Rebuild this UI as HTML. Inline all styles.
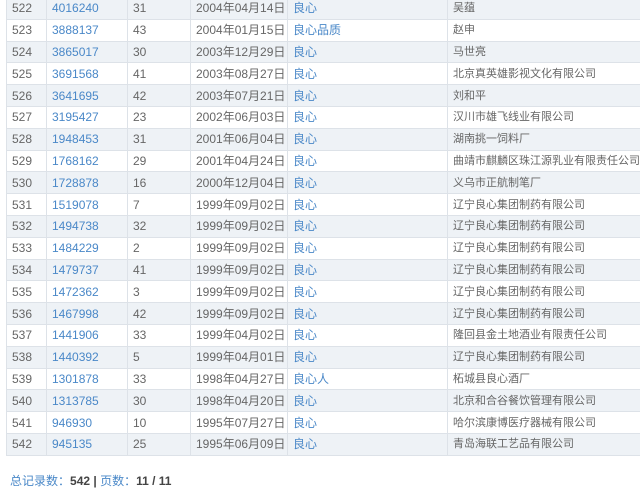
<!DOCTYPE html>
<html><head><meta charset="utf-8"><style>
html,body{margin:0;padding:0;background:#fff;width:640px;height:492px;overflow:hidden;font-family:"Liberation Sans","Noto Sans CJK SC",sans-serif;font-size:12px;color:#666}
table{position:absolute;left:6px;top:-3px;border-collapse:collapse;width:640px;table-layout:fixed}
tr{height:21.8px}
td{border:1px solid #dde2e8;padding:0 0 0 5px;white-space:nowrap;overflow:hidden;line-height:14px;vertical-align:middle}
td:last-child{font-size:11px}
tr:nth-child(odd) td{background:#eef2f6}
a{color:#4a88c8;text-decoration:none}
.f{position:absolute;left:10px;top:472px;font-size:12px;color:#4a88c8}
.f b{color:#444}
</style></head><body>
<table>
<colgroup><col style="width:40px"><col style="width:81px"><col style="width:63px"><col style="width:97px"><col style="width:160px"><col style="width:199px"></colgroup>
<tr><td>522</td><td><a>4016240</a></td><td>31</td><td>2004年04月14日</td><td><a>良心</a></td><td>吴蕴</td></tr>
<tr><td>523</td><td><a>3888137</a></td><td>43</td><td>2004年01月15日</td><td><a>良心品质</a></td><td>赵申</td></tr>
<tr><td>524</td><td><a>3865017</a></td><td>30</td><td>2003年12月29日</td><td><a>良心</a></td><td>马世亮</td></tr>
<tr><td>525</td><td><a>3691568</a></td><td>41</td><td>2003年08月27日</td><td><a>良心</a></td><td>北京真英雄影视文化有限公司</td></tr>
<tr><td>526</td><td><a>3641695</a></td><td>42</td><td>2003年07月21日</td><td><a>良心</a></td><td>刘和平</td></tr>
<tr><td>527</td><td><a>3195427</a></td><td>23</td><td>2002年06月03日</td><td><a>良心</a></td><td>汉川市雄飞线业有限公司</td></tr>
<tr><td>528</td><td><a>1948453</a></td><td>31</td><td>2001年06月04日</td><td><a>良心</a></td><td>湖南挑一饲料厂</td></tr>
<tr><td>529</td><td><a>1768162</a></td><td>29</td><td>2001年04月24日</td><td><a>良心</a></td><td>曲靖市麒麟区珠江源乳业有限责任公司</td></tr>
<tr><td>530</td><td><a>1728878</a></td><td>16</td><td>2000年12月04日</td><td><a>良心</a></td><td>义乌市正航制笔厂</td></tr>
<tr><td>531</td><td><a>1519078</a></td><td>7</td><td>1999年09月02日</td><td><a>良心</a></td><td>辽宁良心集团制药有限公司</td></tr>
<tr><td>532</td><td><a>1494738</a></td><td>32</td><td>1999年09月02日</td><td><a>良心</a></td><td>辽宁良心集团制药有限公司</td></tr>
<tr><td>533</td><td><a>1484229</a></td><td>2</td><td>1999年09月02日</td><td><a>良心</a></td><td>辽宁良心集团制药有限公司</td></tr>
<tr><td>534</td><td><a>1479737</a></td><td>41</td><td>1999年09月02日</td><td><a>良心</a></td><td>辽宁良心集团制药有限公司</td></tr>
<tr><td>535</td><td><a>1472362</a></td><td>3</td><td>1999年09月02日</td><td><a>良心</a></td><td>辽宁良心集团制药有限公司</td></tr>
<tr><td>536</td><td><a>1467998</a></td><td>42</td><td>1999年09月02日</td><td><a>良心</a></td><td>辽宁良心集团制药有限公司</td></tr>
<tr><td>537</td><td><a>1441906</a></td><td>33</td><td>1999年04月02日</td><td><a>良心</a></td><td>隆回县金土地酒业有限责任公司</td></tr>
<tr><td>538</td><td><a>1440392</a></td><td>5</td><td>1999年04月01日</td><td><a>良心</a></td><td>辽宁良心集团制药有限公司</td></tr>
<tr><td>539</td><td><a>1301878</a></td><td>33</td><td>1998年04月27日</td><td><a>良心人</a></td><td>柘城县良心酒厂</td></tr>
<tr><td>540</td><td><a>1313785</a></td><td>30</td><td>1998年04月20日</td><td><a>良心</a></td><td>北京和合谷餐饮管理有限公司</td></tr>
<tr><td>541</td><td><a>946930</a></td><td>10</td><td>1995年07月27日</td><td><a>良心</a></td><td>哈尔滨康博医疗器械有限公司</td></tr>
<tr><td>542</td><td><a>945135</a></td><td>25</td><td>1995年06月09日</td><td><a>良心</a></td><td>青岛海联工艺品有限公司</td></tr>
</table>
<div class="f">总记录数：<b>542</b> <b>|</b> 页数：<b>11 / 11</b></div>
</body></html>
